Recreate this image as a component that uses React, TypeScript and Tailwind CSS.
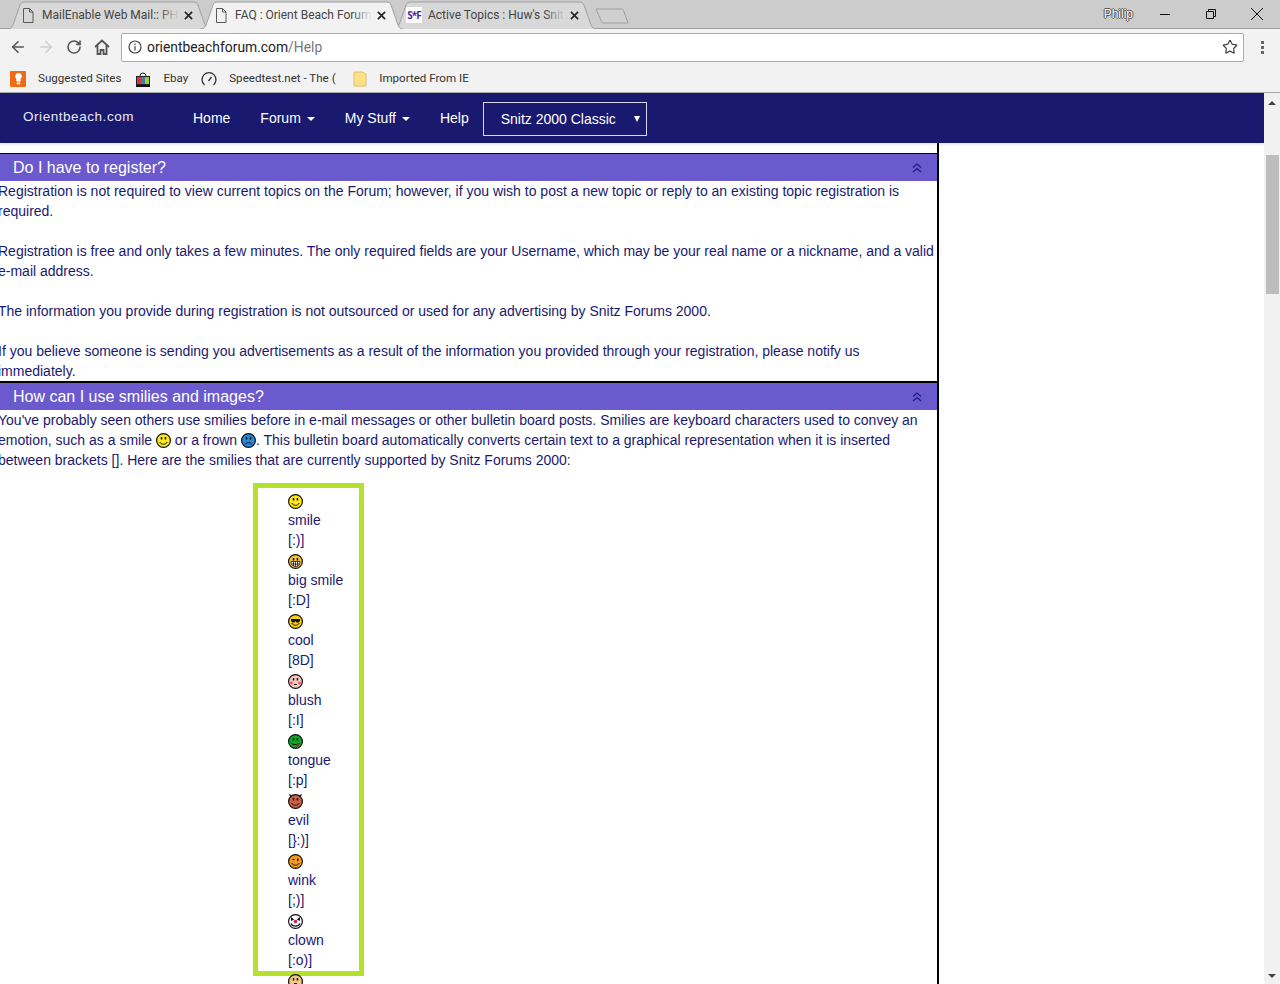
import { ArrowLeft, ArrowRight, RotateCw, Star } from "lucide-react";

const sans = "font-['Liberation_Sans',Arial,sans-serif]";
const ui = "font-['Roboto',sans-serif]";

const smilies = [
  { kind: "smile", name: "smile", code: "[:)]" },
  { kind: "big", name: "big smile", code: "[:D]" },
  { kind: "cool", name: "cool", code: "[8D]" },
  { kind: "blush", name: "blush", code: "[:I]" },
  { kind: "tongue", name: "tongue", code: "[:p]" },
  { kind: "evil", name: "evil", code: "[}:)]" },
  { kind: "wink", name: "wink", code: "[;)]" },
  { kind: "clown", name: "clown", code: "[:o)]" },
  { kind: "shock", name: "shock", code: "[:0]" },
];

const faceColors: Record<string, string> = {
  smile: "#ffe81a",
  big: "#f5c33b",
  cool: "#f5d020",
  blush: "#f9c7c0",
  tongue: "#12a52a",
  evil: "#c9634a",
  wink: "#f09a20",
  clown: "#ffffff",
  shock: "#f0c880",
  frown: "#2b86d6",
};

function Smiley({ kind }: { kind: string }) {
  return (
    <svg viewBox="0 0 15 15" className="block h-[15px] w-[15px]">
      <circle cx="7.5" cy="7.5" r="6.9" fill={faceColors[kind]} stroke="#111" strokeWidth="1.200" />
      {kind === "evil" && <path d="M1 0l1.500 4 2.500-2.500zM14 0l-1.500 4L10 1.500z" fill="#222" />}
      {kind === "cool" ? (
        <path d="M3 5h9v2l-1.500 1.500h-2L7.500 7 6.500 8.500h-2L3 7z" fill="#111" />
      ) : kind === "clown" ? (
        <>
          <path d="M3 3l3.200 2.500L3 7zM12 3L8.800 5.500 12 7z" fill="#111" />
          <circle cx="7.5" cy="7.500" r="1.800" fill="#d01c4a" />
        </>
      ) : kind === "wink" ? (
        <>
          <rect x="4.500" y="5" width="2" height="1" fill="#111" />
          <rect x="9" y="4.500" width="1.500" height="2.500" fill="#111" />
        </>
      ) : (
        <>
          <rect x="4.800" y="4" width="1.500" height="2.500" fill="#111" />
          <rect x="8.700" y="4" width="1.500" height="2.500" fill="#111" />
        </>
      )}
      {kind === "big" && (
        <path d="M3 7.500h9c0 3.500-2 5-4.500 5S3 11 3 7.500zM5.500 8v4M7.500 8v4.500M9.500 8v4M3.500 10h8" fill="#fff" stroke="#111" strokeWidth="0.800" />
      )}
      {kind === "blush" && (
        <>
          <circle cx="3.500" cy="9" r="1.500" fill="#ee5a66" />
          <circle cx="11.500" cy="9" r="1.500" fill="#ee5a66" />
          <path d="M6 10.500h3" stroke="#111" />
        </>
      )}
      {kind === "tongue" && (
        <>
          <path d="M3.500 9.500c2 1.500 5 1.500 8 0" stroke="#111" fill="none" />
          <path d="M8 10.500h3v2H8.500z" fill="#a83228" />
        </>
      )}
      {kind === "frown" && <path d="M4 11.500c1.500-2.500 5.500-2.500 7 0" stroke="#111" fill="none" />}
      {kind === "shock" && <rect x="6" y="9" width="3" height="3.500" fill="#222" />}
      {(kind === "smile" || kind === "cool" || kind === "evil" || kind === "wink") && (
        <path d="M3.800 9c1 3 6.400 3 7.400 0" stroke="#111" fill="none" />
      )}
      {kind === "clown" && <path d="M3 9.500c1.500 3.500 7.500 3.500 9 0" fill="none" stroke="#111" strokeWidth="1.400" />}
    </svg>
  );
}

function PageIcon() {
  return (
    <svg viewBox="0 0 12 15" className="h-[15px] w-[12px] shrink-0" fill="none" stroke="#5a5a5a">
      <path d="M1.500.5h6l3.500 3.500v10.500h-9.500zM7.500.5V4H11" />
    </svg>
  );
}

function SnitzIcon() {
  return (
    <span className="ml-[13px] flex h-4 w-4 shrink-0 items-center justify-center bg-white text-[10px] font-bold leading-none tracking-[-1px] text-[#5a1a9a]">
      S*F
    </span>
  );
}

function Tab({ label, active, snitz }: { label: string; active?: boolean; snitz?: boolean }) {
  const fill = active ? "#f2f2f2" : "#d8d8d8";
  const fade = active ? "from-[#f2f2f2]/0 to-[#f2f2f2]" : "from-[#d8d8d8]/0 to-[#d8d8d8]";
  return (
    <div className={`relative -mr-[11px] flex h-[28px] w-[204px] items-center ${active ? "z-10" : ""}`}>
      <svg viewBox="0 0 204 28" className="absolute inset-0 h-full w-full">
        <path d="M0 28 L1 28 C4 28 5 26 6 24 L13 4 C14 2 15 1 18 1 H186 C189 1 190 2 191 4 L198 24 C199 26 200 28 203 28 H204" fill={fill} stroke="#a0a0a0" />
      </svg>
      <div className="relative flex min-w-0 flex-1 items-center">
        {snitz ? <SnitzIcon /> : <span className="ml-[15px] mr-[2px]"><PageIcon /></span>}
        <span className={`relative ml-[6px] w-[137px] overflow-hidden whitespace-nowrap ${ui} text-[12px] text-[#444]`}>
          {label}
          <span className={`absolute inset-y-0 right-0 w-5 bg-gradient-to-r ${fade}`} />
        </span>
        <svg viewBox="0 0 10 10" className="ml-[5px] h-[9px] w-[9px] shrink-0" stroke="#222" strokeWidth="1.800">
          <path d="M1 1l8 8M9 1l-8 8" />
        </svg>
      </div>
    </div>
  );
}

function TabStrip() {
  return (
    <div className="flex h-[29px] shrink-0 items-end border-b border-[#a0a0a0] bg-[#cccccc] pl-[7px]">
      <div className="-mb-px flex">
        <Tab label="MailEnable Web Mail:: PHP" />
        <Tab label="FAQ : Orient Beach Forum" active />
        <Tab label="Active Topics : Huw's Snitz" snitz />
      </div>
      <svg viewBox="0 0 36 16" className="mb-[4px] ml-[9px] h-[16px] w-[36px]">
        <path d="M1 1h25c1.500 0 2 .5 2.500 1.500L33 15H9c-1.500 0-2-.5-2.500-1.500z" fill="#d0d0d0" stroke="#a0a0a0" />
      </svg>
      <div className="mb-[5px] ml-auto flex items-center">
        <span className={`${sans} text-[12px] text-white [text-shadow:1px_0_0_#555,-1px_0_0_#555,0_1px_0_#555,0_-1px_0_#555]`}>Philip</span>
        <svg viewBox="0 0 12 12" className="ml-[26px] h-3 w-3" stroke="#111"><path d="M1 6.500h10" /></svg>
        <svg viewBox="0 0 12 12" className="ml-[34px] h-3 w-3" stroke="#111" fill="none"><path d="M1.500 3.500h7v7h-7zM3.500 3.500v-2h7v7h-2" /></svg>
        <svg viewBox="0 0 14 14" className="ml-[33px] mr-[16px] h-[14px] w-[14px]" stroke="#111"><path d="M1 1l12 12M13 1L1 13" /></svg>
      </div>
    </div>
  );
}

function Toolbar() {
  return (
    <div className="flex h-[36px] shrink-0 items-center bg-[#f2f2f2] pl-[9px]">
      <ArrowLeft size={18} strokeWidth={2.200} className="text-[#555]" />
      <ArrowRight size={18} strokeWidth={2.200} className="ml-[10px] text-[#cfcfcf]" />
      <RotateCw size={16} strokeWidth={2.400} className="ml-[11px] text-[#555]" />
      <svg viewBox="0 0 16 16" className="ml-[12px] h-4 w-4" fill="none" stroke="#555" strokeWidth="1.800">
        <path d="M1 8l7-6.500L15 8M3.500 6.500V15h3v-4h3v4h3V6.500" />
      </svg>
      <div className="ml-[11px] flex h-[29px] w-[1123px] items-center rounded-[2px] border border-[#ababab] bg-white pl-[6px] pr-[5px]">
        <svg viewBox="0 0 14 14" className="h-[14px] w-[14px]" fill="none" stroke="#444" strokeWidth="1.200">
          <circle cx="7" cy="7" r="6" />
          <path d="M7 6v4.500M7 3.500v1.500" />
        </svg>
        <span className={`ml-[5px] ${ui} text-[13.850px] text-[#222]`}>
          orientbeachforum.com<span className="text-[#777]">/Help</span>
        </span>
        <Star size={16} strokeWidth={1.800} className="ml-auto text-[#444]" />
      </div>
      <div className="ml-[17px] flex flex-col gap-[2px]">
        <span className="h-[3px] w-[3px] bg-[#666]" />
        <span className="h-[3px] w-[3px] bg-[#666]" />
        <span className="h-[3px] w-[3px] bg-[#666]" />
      </div>
    </div>
  );
}

function BookmarksBar() {
  return (
    <div className={`flex h-[28px] shrink-0 items-center border-b border-[#a9a9a9] bg-[#f2f2f2] pl-[10px] ${ui} text-[11.600px] text-[#333]`}>
      <span className="flex h-4 w-4 items-center justify-center rounded-[1px] bg-[#f26a12]">
        <svg viewBox="0 0 10 14" className="h-3 w-[9px]" fill="#fff">
          <path d="M5 0a4 4 0 0 1 2.500 7.100V10h-5V7.100A4 4 0 0 1 5 0zM3 11h4v2H3z" />
        </svg>
      </span>
      <span className="ml-[12px]">Suggested Sites</span>
      <svg viewBox="0 0 16 16" className="ml-[14px] h-4 w-4">
        <path d="M5 5a3 3 0 0 1 6 0" fill="none" stroke="#222" />
        <rect x="1" y="5" width="14" height="9" fill="#222" />
        <rect x="2" y="6" width="4" height="7" fill="#d33" />
        <rect x="6" y="6" width="4" height="7" fill="#38a" />
        <rect x="10" y="6" width="4" height="7" fill="#ac3" />
        <rect x="1" y="14" width="14" height="2" fill="#111" />
      </svg>
      <span className="ml-[12px]">Ebay</span>
      <svg viewBox="0 0 16 16" className="ml-[13px] h-4 w-4" fill="none" stroke="#333" strokeWidth="1.300">
        <path d="M3.500 14a7 7 0 1 1 9 0" />
        <path d="M7.500 10l3-4" />
      </svg>
      <span className="ml-[12px] w-[108px] overflow-hidden whitespace-nowrap">Speedtest.net - The (</span>
      <svg viewBox="0 0 14 16" className="ml-[16px] h-4 w-[14px]">
        <path d="M1 1h8l4 2v12H1z" fill="#fde08a" stroke="#e5c060" />
      </svg>
      <span className="ml-[12px]">Imported From IE</span>
    </div>
  );
}

function Caret() {
  return <span className="ml-[6px] inline-block border-x-[4px] border-t-[4px] border-x-transparent border-t-white align-middle" />;
}

function SiteNav() {
  return (
    <nav className={`flex h-[50px] items-center bg-[#191970] ${sans} text-[14px] text-white shadow-[0_1px_3px_rgba(0,0,0,0.15)]`}>
      <span className="ml-[23px] w-[170px] pb-[2px] text-[13.500px] tracking-[0.55px] text-[#e8e8f4]">Orientbeach.com</span>
      <span>Home</span>
      <span className="ml-[30px]">Forum<Caret /></span>
      <span className="ml-[30px]">My Stuff<Caret /></span>
      <span className="ml-[30px]">Help</span>
      <div className="ml-[14px] mt-[2px] flex h-[34px] w-[164px] items-center border border-[#d8d8e8] pl-[17px]">
        <span>Snitz 2000 Classic</span>
        <span className="ml-[18px] border-x-[3.500px] border-t-[6px] border-x-transparent border-t-white" />
      </div>
    </nav>
  );
}

function SectionHeader({ title }: { title: string }) {
  return (
    <div className="flex h-[27px] items-center bg-[#6a5acd] pl-[13px] pr-[15px] text-[16px] text-white">
      <span>{title}</span>
      <svg viewBox="0 0 10 10" className="ml-auto h-[10px] w-[10px]" fill="none" stroke="#1f1a90" strokeWidth="1.300">
        <path d="M1 4.500l4-3.500 4 3.500M1 9l4-3.500L9 9" />
      </svg>
    </div>
  );
}

function InlineSmiley({ kind }: { kind: string }) {
  return (
    <span className="inline-block align-[-3px]">
      <Smiley kind={kind} />
    </span>
  );
}

function Faq() {
  return (
    <div className={`h-full w-[939px] border-r-2 border-black pt-[10px] ${sans} text-[14px] leading-[20px] text-[#191970]`}>
      <div className="border-t border-black">
        <SectionHeader title="Do I have to register?" />
        <div className="border-b-2 border-black">
          <div className="-ml-[2px]">
            <p>
              Registration is not required to view current topics on the Forum; however, if you wish to post a new topic or reply to an existing topic registration is required.
            </p>
            <p className="mt-5">
              Registration is free and only takes a few minutes. The only required fields are your Username, which may be your real name or a nickname, and a valid e-mail address.
            </p>
            <p className="mt-5">
              The information you provide during registration is not outsourced or used for any advertising by Snitz Forums 2000.
            </p>
            <p className="mt-5">
              If you believe someone is sending you advertisements as a result of the information you provided through your registration, please notify us immediately.
            </p>
          </div>
        </div>
        <SectionHeader title="How can I use smilies and images?" />
        <p className="-ml-[2px]">
          You've probably seen others use smilies before in e-mail messages or other bulletin board posts. Smilies are keyboard characters used to convey an emotion, such as a smile <InlineSmiley kind="smile" /> or a frown <InlineSmiley kind="frown" />. This bulletin board automatically converts certain text to a graphical representation when it is inserted between brackets []. Here are the smilies that are currently supported by Snitz Forums 2000:
        </p>
        <div className="ml-[253px] mt-[13px] h-[493px] w-[111px] border-[5px] border-[#b5e02b] pl-[30px] pt-[3px]">
          {smilies.map((s) => (
            <div key={s.name} className="h-[60px]">
              <div className="h-[19px] pt-[3px]"><Smiley kind={s.kind} /></div>
              <div>{s.name}</div>
              <div>{s.code}</div>
            </div>
          ))}
        </div>
      </div>
    </div>
  );
}

function Scrollbar() {
  return (
    <div className="flex w-[16px] shrink-0 flex-col items-center bg-[#f1f1f1]">
      <div className="mt-[8px] border-x-[4px] border-b-[4px] border-x-transparent border-b-[#444]" />
      <div className="mt-[50px] h-[139px] w-[13px] bg-[#bdbdbd]" />
      <div className="mb-[6px] mt-auto border-x-[4px] border-t-[4px] border-x-transparent border-t-[#444]" />
    </div>
  );
}

export default function App() {
  return (
    <div className="flex h-[984px] w-[1280px] flex-col overflow-hidden bg-white">
      <TabStrip />
      <Toolbar />
      <BookmarksBar />
      <div className="flex min-h-0 flex-1">
        <div className="flex min-w-0 flex-1 flex-col overflow-hidden">
          <SiteNav />
          <div className="min-h-0 flex-1 overflow-hidden">
            <Faq />
          </div>
        </div>
        <Scrollbar />
      </div>
    </div>
  );
}
